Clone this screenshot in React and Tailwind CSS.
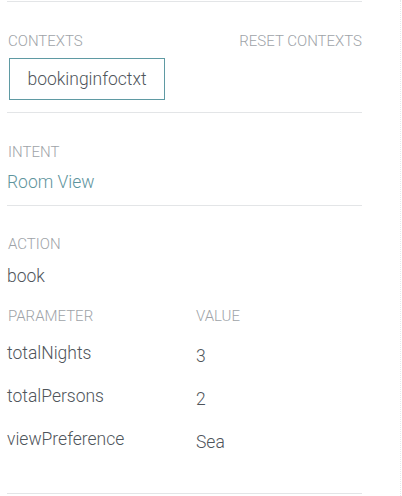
const params = [
    { name: "totalNights", value: "3" },
    { name: "totalPersons", value: "2" },
    { name: "viewPreference", value: "Sea" },
];

const Label = ({ children, className = "" }) => (
    <div className={"text-[15px] leading-[18px] uppercase text-[#9ea3a8] " + className}>
        {children}
    </div>
);

export default function App() {
    return (
        <div
            className="flex w-[402px] min-h-[496px] bg-white font-light"
            style={{ fontFamily: "Roboto, 'Liberation Sans', sans-serif" }}>
            <div className="w-[362px] pl-[7px] pt-[1px]">
                <div className="border-t border-[#e3e5e7]" />

                {/* contexts */}
                <div className="flex justify-between pt-[30px]">
                    <Label className="pl-[1px]">Contexts</Label>
                    <Label className="text-[#6a9ea7] cursor-pointer">Reset contexts</Label>
                </div>
                <div className="mt-[8px] ml-[2px] flex h-[42px] w-[156px] items-center justify-center border border-[#5f9aa3] text-[17.5px] text-[#4f555b]">
                    bookinginfoctxt
                </div>
                <div className="mt-[12px] border-t border-[#e3e5e7]" />

                {/* intent */}
                <Label className="mt-[30px] pl-[1px]">Intent</Label>
                <div className="mt-[10px] text-[17.5px] leading-[22px] text-[#5e949d]">Room View</div>
                <div className="mt-[12px] border-t border-[#e3e5e7]" />

                {/* action */}
                <Label className="mt-[29px] pl-[1px]">Action</Label>
                <div className="mt-[12px] text-[17.5px] leading-[22px] text-[#4f555b]">book</div>

                <div className="mt-[20px] flex">
                    <Label className="w-[189px] pl-[1px]">Parameter</Label>
                    <Label>Value</Label>
                </div>
                <div className="mt-[17px] flex flex-col gap-[18px]">
                    {params.map((p) => (
                        <div key={p.name} className="flex text-[17.5px] leading-[22px] text-[#4f555b]">
                            <div className="w-[189px]">{p.name}</div>
                            <div className="pt-[3px]">{p.value}</div>
                        </div>
                    ))}
                </div>
                <div className="mt-[40px] border-t border-[#e3e5e7]" />
            </div>
            <div className="flex-1" />
            <div className="w-[1px] border-r border-dotted border-[#e6e8ea]" />
            <div className="w-[1px]" />
        </div>
    );
}
